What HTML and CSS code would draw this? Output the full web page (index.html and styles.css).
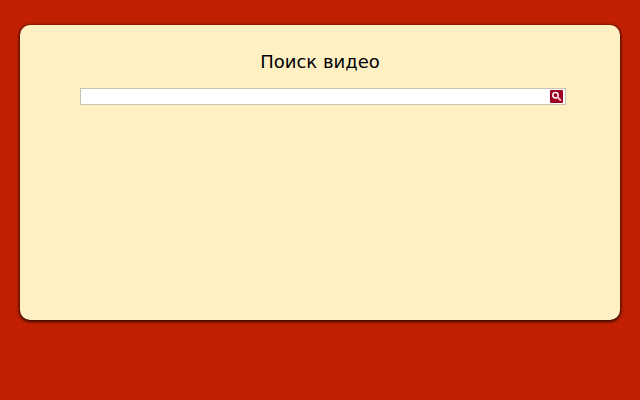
FILE: index.html
```html
<!DOCTYPE html>
<html lang="ru">
<head>
<meta charset="utf-8">
<title>Поиск видео</title>
<link rel="stylesheet" href="styles.css">
</head>
<body>
<main class="card">
  <h1 class="title">Поиск видео</h1>
  <form class="search">
    <input class="field" type="text">
    <button class="go" type="button" aria-label="Поиск">
      <svg viewBox="0 0 13 13" width="13" height="13">
        <circle cx="5.5" cy="5.2" r="2.7" fill="none" stroke="#fff" stroke-width="1.5"/>
        <path d="M7.8 7.5 L10.4 10" stroke="#ffb8c8" stroke-width="2" stroke-linecap="round"/>
      </svg>
    </button>
  </form>
</main>
</body>
</html>
```
FILE: styles.css
```css
html, body { margin: 0; padding: 0; height: 100%; }
body {
  background: #c02000;
  padding: 25px 20px 0;
  box-sizing: border-box;
  font-family: "DejaVu Sans", sans-serif;
}
.card {
  height: 295px;
  background: #fff0c4;
  border-radius: 10px;
  box-shadow: 0 1px 3px 1px #3c0a00;
  padding-top: 26px;
  box-sizing: border-box;
}
.title {
  margin: 0;
  font-size: 18px;
  font-weight: 400;
  line-height: 22px;
  text-align: center;
  color: #000;
}
.search {
  display: flex;
  align-items: center;
  margin: 15px 54px 0 60px;
  height: 17px;
  background: #fff;
  border: 1px solid #c8c4b4;
  box-sizing: border-box;
  padding-right: 2px;
}
.field {
  flex: 1;
  min-width: 0;
  border: 0;
  padding: 0;
  height: 15px;
  background: transparent;
}
.go {
  display: block;
  width: 13px;
  height: 13px;
  padding: 0;
  border: 0;
  border-radius: 1px;
  background: #a00020;
}
.go svg { display: block; }
```
